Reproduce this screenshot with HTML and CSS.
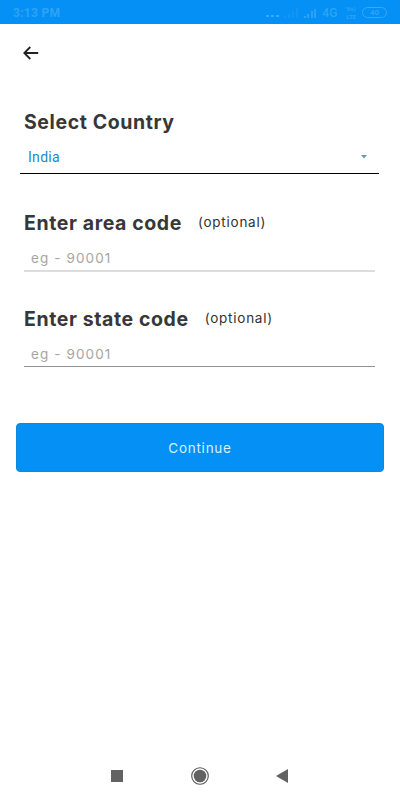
FILE: index.html
```
<!DOCTYPE html>
<html lang="en">
<head>
  <meta charset="UTF-8" />
  <meta name="viewport" content="width=device-width, initial-scale=1.0"/>
  <title>Select Country</title>
  <link rel="stylesheet" href="styles.css">
</head>
<body>
  <div class="status-bar">
    <span class="time">3:13 PM</span>
    <div class="status-icons">
      <span class="dots"><i></i><i></i><i></i></span>
      <svg class="signal weak" width="15" height="10" viewBox="0 0 15 10"><path d="M1 10V8M5 10V6M9 10V3M13 10V0"/></svg>
      <svg class="signal" width="13" height="10" viewBox="0 0 13 10"><path d="M1 10V8M4 10V6M8 10V3M11 10V1"/></svg>
      <span class="network">4G</span>
      <div class="volte"><span>Vo)</span><span>LTE</span></div>
      <span class="battery">40</span>
    </div>
  </div>

  <header>
    <svg class="back" width="16" height="14" viewBox="0 0 16 14"><path d="M15.2 7H1.5M7.3 1L1.3 7l6 6"/></svg>
  </header>

  <main>
    <label class="title country-title" for="country">Select Country</label>
    <div class="select" id="country">
      <span>India</span>
      <svg width="6" height="4" viewBox="0 0 6 4"><path d="M0 0h6L3 3.5z"/></svg>
    </div>

    <div class="field area">
      <label for="area"><span class="title">Enter area code</span><span class="optional">(optional)</span></label>
      <input id="area" type="text" placeholder="eg - 90001">
    </div>

    <div class="field state">
      <label for="state"><span class="title">Enter state code</span><span class="optional">(optional)</span></label>
      <input id="state" type="text" placeholder="eg - 90001">
    </div>

    <button>Continue</button>
  </main>

  <nav>
    <svg width="12" height="12" viewBox="0 0 12 12"><path d="M0 0h12v12H0z"/></svg>
    <svg width="18" height="18" viewBox="0 0 18 18"><circle cx="9" cy="9" r="8.3" fill="none" stroke="#555" stroke-width="1.1"/><circle cx="9" cy="9" r="6.3"/></svg>
    <svg width="12" height="14" viewBox="0 0 12 14"><path d="M12 0v14L0 7z"/></svg>
  </nav>
</body>
</html>
```
FILE: styles.css
```
* {
  box-sizing: border-box;
}

body {
  margin: 0;
  height: 800px;
  display: flex;
  flex-direction: column;
  background-color: #fff;
  color: #373737;
  font-family: Inter, sans-serif;
}

.status-bar {
  height: 24px;
  padding: 1px 13px 0 13px;
  display: flex;
  align-items: center;
  justify-content: space-between;
  background-color: #0490f4;
  color: #2fa3f5;
}

.time {
  font: bold 12px Roboto, sans-serif;
  letter-spacing: 0.3px;
}

.status-icons {
  display: flex;
  align-items: center;
}

.dots {
  display: flex;
  gap: 2px;
  margin: 6px 5px 0 0;
}

.dots i {
  width: 3px;
  height: 2px;
  background-color: #39a8f6;
}

.signal {
  margin-right: 5px;
  fill: none;
  stroke: #39a8f6;
  stroke-width: 1.5;
}

.weak {
  opacity: 0.35;
}

.network {
  margin-right: 9px;
  font: 500 12px Roboto, sans-serif;
}

.volte {
  display: flex;
  flex-direction: column;
  margin-right: 6px;
  font: bold 6px/8px Roboto, sans-serif;
}

.battery {
  width: 25px;
  height: 11px;
  border: 1px solid #39a8f6;
  border-radius: 6px;
  text-align: center;
  font: bold 8px/9px Roboto, sans-serif;
}

header {
  height: 85px;
  padding: 22px 23px 0;
}

.back {
  display: block;
  fill: none;
  stroke: #222;
  stroke-width: 1.8;
}

main {
  flex: 1;
  display: flex;
  flex-direction: column;
}

.title {
  font-size: 19.5px;
  font-weight: 700;
  line-height: 26px;
  letter-spacing: 0.6px;
}

.country-title {
  margin-left: 24px;
}

.select {
  height: 39px;
  margin: 0 21px 0 20px;
  padding: 5px 12px 0 8px;
  display: flex;
  align-items: center;
  justify-content: space-between;
  border-bottom: 1px solid #000;
  color: #1b88cc;
  font: 14px Roboto, sans-serif;
  letter-spacing: 0.3px;
}

.select svg {
  fill: #54a3bd;
}

.field {
  display: flex;
  flex-direction: column;
  margin: 36px 25px 0 24px;
}

.field label {
  display: flex;
  align-items: center;
}

.optional {
  margin: -2px 0 0 16px;
  font-size: 13.5px;
  color: #333;
  letter-spacing: 0.75px;
}

input {
  height: 36px;
  padding: 10px 6px 0 7px;
  border: 0;
  border-bottom: 2px solid #ddd;
  outline: none;
  font: 13.5px Inter, sans-serif;
  letter-spacing: 1.1px;
}

input::placeholder {
  color: #a5a5a5;
}

.state {
  margin-top: 34px;
}

.state input {
  height: 35px;
  border-bottom: 1px solid #929292;
}

button {
  height: 49px;
  margin: 56px 16px 0;
  border: 1px solid #0d88da;
  border-radius: 4px;
  background-color: #0490f4;
  color: #d4f2ff;
  font: 13.5px Inter, sans-serif;
  letter-spacing: 0.75px;
}

nav {
  height: 48px;
  padding: 0 112px 0 111px;
  display: flex;
  align-items: center;
  justify-content: space-between;
  fill: #626262;
}
```
